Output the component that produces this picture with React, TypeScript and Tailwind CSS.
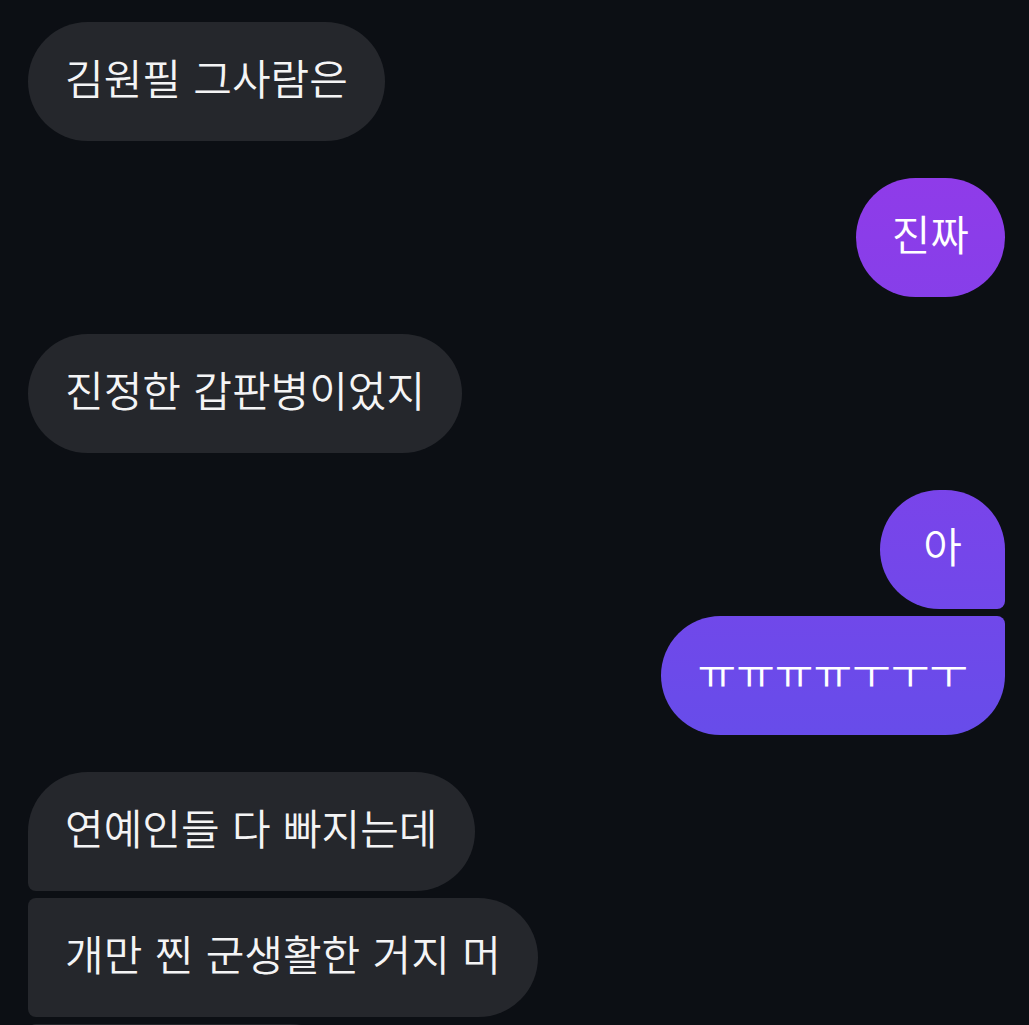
import React from "react";

const font = { fontFamily: '"Noto Sans CJK KR", "Noto Sans", sans-serif' };

const grayBase =
  "h-[119px] flex items-center justify-center pb-[9px] px-[37px] bg-[#25272c] text-[#f4f4f5] text-[42px] font-[350] leading-none whitespace-nowrap [word-spacing:3px]";
const purpleBase =
  "h-[119px] flex items-center justify-center pb-[9px] px-[37px] text-white text-[42px] font-[350] leading-none whitespace-nowrap [word-spacing:3px] bg-fixed bg-[linear-gradient(180deg,#9c36e9_0%,#8b3de9_23%,#7546ea_54%,#6a4bea_68%,#5355ea_100%)]";

export default function App() {
  return (
    <div
      className="w-[1029px] h-[1025px] overflow-hidden bg-[#0c0f14] px-[24px] pt-[22px] flex flex-col gap-[37px]"
      style={font}
    >
      <div className="flex flex-col items-start pl-[4px]">
        <div className={`${grayBase} rounded-[60px]`}>김원필 그사람은</div>
      </div>
      <div className="flex flex-col items-end">
        <div className={`${purpleBase} rounded-[60px] !px-[36px]`}>진짜</div>
      </div>
      <div className="flex flex-col items-start pl-[4px]">
        <div className={`${grayBase} rounded-[60px]`}>진정한 갑판병이었지</div>
      </div>
      <div className="flex flex-col items-end gap-[7px]">
        <div className={`${purpleBase} rounded-[60px] rounded-br-[8px] min-w-[125px]`}>아</div>
        <div className={`${purpleBase} rounded-[60px] rounded-tr-[8px]`}>ㅠㅠㅠㅠㅜㅜㅜ</div>
      </div>
      <div className="flex flex-col items-start gap-[7px] pl-[4px]">
        <div className={`${grayBase} rounded-[60px] rounded-bl-[8px]`}>연예인들 다 빠지는데</div>
        <div className={`${grayBase} rounded-[60px] rounded-tl-[8px] rounded-bl-[8px]`}>개만 찐 군생활한 거지 머</div>
        <div className={`${grayBase} rounded-[60px] rounded-tl-[8px] w-[322px]`}>&nbsp;</div>
      </div>
    </div>
  );
}
